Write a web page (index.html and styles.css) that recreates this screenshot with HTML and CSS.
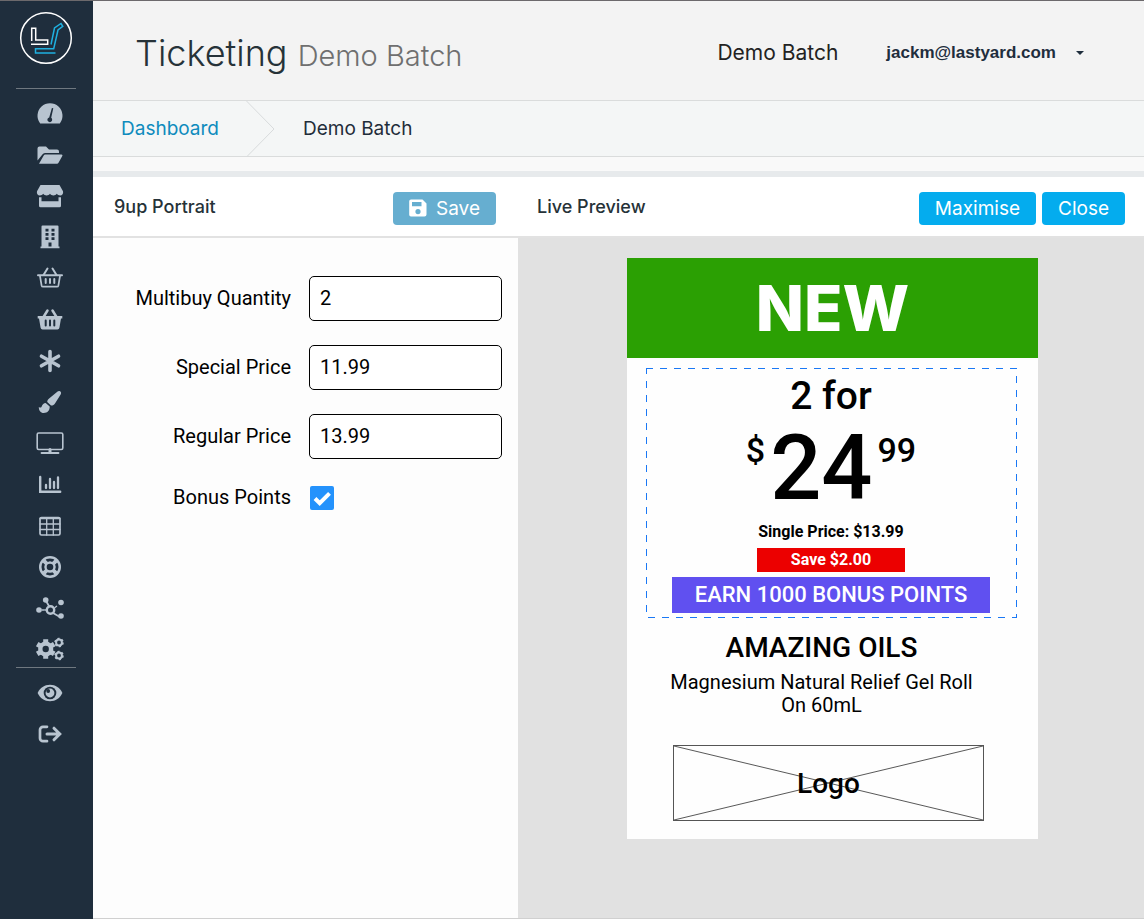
FILE: index.html
```html
<!DOCTYPE html>
<html lang="en">
<head>
<meta charset="utf-8">
<meta name="viewport" content="width=device-width, initial-scale=1">
<title>Ticketing – Demo Batch</title>
<link rel="stylesheet" href="styles.css">
</head>
<body>
<div class="app">
  <aside class="sidebar">
    <a class="brand" href="#" aria-label="Home">
      <svg width="54" height="54" viewBox="0 0 54 54" fill="none">
        <circle cx="27" cy="27" r="25.3" stroke="#fff" stroke-width="1.5"/>
        <path d="M12.700 30V17.300h4V29h12v4.200H12" stroke="#fff" stroke-width="1.500"/>
        <path d="M32 33.500L35.500 17l6.500-4.500 1.800 2.800-4.800 3.700-4.300 18.700H16.500v4.300h20" stroke="#1fb0e0" stroke-width="1.500"/>
      </svg>
    </a>
    <nav class="nav" aria-label="Main">
      <a href="#" aria-label="Overview"><svg viewBox="0 0 28 28"><path d="M4.200 23.500A12.500 12.500 0 1 1 23.800 23.500Z"/><path class="cut" d="M17.300 8.200l-2.100 9.600a2.400 2.400 0 1 1-2-.4l2.700-9.500z"/></svg></a>
      <a href="#" aria-label="Files"><svg viewBox="0 0 28 28"><path d="M1.500 19.500V7.500a2 2 0 0 1 2-2h6.500l3 3h8a2 2 0 0 1 2 2v1.600H9a3 3 0 0 0-2.600 1.500z"/><path d="M3 22.700l4.700-8.200a1.800 1.800 0 0 1 1.500-.9h16.300c.8 0 1.200.8.800 1.500l-3.800 6.600a1.800 1.800 0 0 1-1.500 1z"/></svg></a>
      <a href="#" aria-label="Stores"><svg viewBox="0 0 28 28"><path d="M4.500 3h19l3.500 6.200c.6 2.500-.8 4.300-2.800 4.300-1.500 0-2.600-.7-3.400-1.700-.8 1-2 1.700-3.400 1.700s-2.600-.7-3.400-1.700c-.8 1-2 1.700-3.400 1.700s-2.600-.7-3.400-1.700c-.8 1-1.900 1.700-3.400 1.700-2 0-3.400-1.800-2.800-4.300z"/><path d="M3 15.200h2.500v4h17v-4H25v8.500a1.500 1.500 0 0 1-1.500 1.500h-19A1.500 1.500 0 0 1 3 23.700z"/></svg></a>
      <a href="#" aria-label="Offices"><svg viewBox="0 0 28 28"><path d="M6.500 2.500h15a1 1 0 0 1 1 1v20H23.500v1.700h-19v-1.700h1v-20a1 1 0 0 1 1-1z"/><path class="cut" d="M9.500 5.800h3v2.800h-3zM15.500 5.800h3v2.800h-3zM9.500 10h3v2.800h-3zM15.500 10h3v2.800h-3zM9.500 14.200h3V17h-3zM15.500 14.200h3V17h-3zM12.500 19.500h3v4h-3z"/></svg></a>
      <a href="#" aria-label="Baskets"><svg viewBox="0 0 28 28"><g class="line"><path d="M7.500 11l4-6.500M20.500 11l-4-6.500" stroke-width="2"/><path d="M2 11.300h24" stroke-width="2"/><path d="M4 12l1.600 9.500a1.500 1.500 0 0 0 1.500 1.200h13.800a1.500 1.500 0 0 0 1.500-1.200L24 12" stroke-width="1.700"/><path d="M9.700 15v4M14 15v4M18.300 15v4" stroke-width="2"/></g></svg></a>
      <a href="#" aria-label="Orders"><svg viewBox="0 0 28 28"><path class="line" d="M7.500 11l4-6.500M20.500 11l-4-6.500" stroke-width="2.500"/><path d="M1.700 10h24.600v2.500h-1.300l-1.600 9.300a2 2 0 0 1-2 1.700H6.600a2 2 0 0 1-2-1.700L3 12.500H1.700z"/><path class="cutline" d="M9.700 14.500v5M14 14.500v5M18.300 14.500v5"/></svg></a>
      <a href="#" aria-label="Specials"><svg viewBox="0 0 28 28"><path class="line" d="M14 4.500v19M5.500 9.200l17 9.600M22.500 9.200l-17 9.600" stroke-width="3.600"/></svg></a>
      <a href="#" aria-label="Design"><svg viewBox="0 0 28 28"><path d="M23.500 3c1.500.4 2 1.700 1.300 3.200l-5.500 8.700c-1.200 1.800-2.600 2.700-4.300 2.600L11.200 14c.1-1.500.7-2.600 1.900-3.600l8.500-6.900c.6-.5 1.200-.7 1.900-.5z"/><path d="M9.700 14.900l4 3.600c.2 3.600-2 6.500-6 6.500C4.500 25 2.800 22.500 2.800 19c1.500 1 2.600.7 3-.8.600-2 2-3.300 3.900-3.300z"/></svg></a>
      <a href="#" aria-label="Screens"><svg viewBox="0 0 28 28"><g class="line"><rect x="1.200" y="4" width="25.600" height="16.500" rx="1.500" stroke-width="1.600"/><path d="M14 20.500v3" stroke-width="3"/><path d="M5.500 24h17" stroke-width="1.800"/></g></svg></a>
      <a href="#" aria-label="Reports"><svg viewBox="0 0 28 28"><path class="line" d="M4.200 6v14.700h20" stroke-width="2.400"/><path class="line" d="M10 17v-3M14 17V8M18 17v-6M22 17V6.500" stroke-width="2.300"/></svg></a>
      <a href="#" aria-label="Tables"><svg viewBox="0 0 28 28"><rect class="line" x="4" y="5.500" width="20" height="17.500" rx="1.500" stroke-width="1.700"/><path class="line" d="M4 6.500h20M4 12h20M4 17.500h20M10.700 6v17M17.300 6v17" stroke-width="1.300"/></svg></a>
      <a href="#" aria-label="Support"><svg viewBox="0 0 28 28"><circle cx="14" cy="14" r="11"/><circle class="ring" cx="14" cy="14" r="7"/><path class="line spoke" d="M7.700 7.700l4 4M20.300 7.700l-4 4M7.700 20.300l4-4M20.300 20.300l-4-4"/><circle cx="14" cy="14" r="5.500"/><circle class="cut" cx="14" cy="14" r="3.300"/></svg></a>
      <a href="#" aria-label="Network"><svg viewBox="0 -2 28 28"><g class="line"><path d="M10 5l3 5M17 17l7 4" stroke-width="1.800"/><path d="M19 11.500l2-1.500M6 14h4" stroke-width="1.300" stroke-dasharray="2 1"/><circle cx="14.500" cy="14" r="3.700" stroke-width="2.400"/></g><circle cx="9.700" cy="4" r="2.800"/><circle cx="25" cy="6.500" r="2.800"/><circle cx="3" cy="14" r="2.800"/><circle cx="25" cy="20" r="2.800"/></svg></a>
      <a href="#" aria-label="Settings"><svg viewBox="0 0 28 28"><path class="tooth" d="M9.700 4.200v19.600M1.200 9.100l17 9.800M18.200 9.100l-17 9.800"/><circle cx="9.700" cy="14" r="7.600"/><circle class="cut" cx="9.700" cy="14" r="3.200"/><circle class="smallteeth" cx="23" cy="7.500" r="3.800"/><circle class="smallring" cx="23" cy="7.500" r="2.900"/><circle class="smallteeth" cx="23" cy="20.500" r="3.800"/><circle class="smallring" cx="23" cy="20.500" r="2.900"/></svg></a>
    </nav>
    <nav class="nav nav-foot" aria-label="Account">
      <a href="#" aria-label="View"><svg viewBox="0 0 28 28"><path d="M1.600 14C4 8.800 8.500 5.800 14 5.800S24 8.800 26.400 14C24 19.200 19.500 22.200 14 22.200S4 19.200 1.600 14z"/><circle class="cut" cx="14" cy="14" r="6.300"/><circle cx="14" cy="14" r="4.400"/><circle class="cut" cx="12.200" cy="12" r="1.900"/></svg></a>
      <a href="#" aria-label="Sign out"><svg viewBox="0 0 28 28"><path class="line" d="M11 6.800H7a3 3 0 0 0-3 3v8.400a3 3 0 0 0 3 3h4" stroke-width="2.700"/><path class="line" d="M11 14h12M18 8.200l5.800 5.800-5.800 5.800" stroke-width="3"/></svg></a>
    </nav>
  </aside>

  <main class="main">
    <header class="header">
      <h1 class="title">Ticketing <small>Demo Batch</small></h1>
      <div class="account">
        <span class="batch">Demo Batch</span>
        <button class="user" type="button">jackm@lastyard.com<span class="caret"></span></button>
      </div>
    </header>
    <nav class="crumbs" aria-label="Breadcrumb">
      <a href="#">Dashboard</a>
      <svg class="chevron" viewBox="0 0 29 56" aria-hidden="true"><path d="M.5 0L28 28 .5 56"/></svg>
      <span>Demo Batch</span>
    </nav>

    <div class="toolbar">
      <div class="bar">
        <h2>9up Portrait</h2>
        <button class="btn btn-save" type="button"><svg viewBox="0 0 18 18" aria-hidden="true"><path fill="#fff" fill-rule="evenodd" d="M2 .5h11.500L17.500 4.500V15.500a2 2 0 0 1-2 2H2a1.800 1.800 0 0 1-1.800-1.800V2.300A1.800 1.800 0 0 1 2 .5zM3 3v4.200h9.500V3zM9 10a2.600 2.600 0 1 0 0 5.200A2.600 2.600 0 0 0 9 10z"/></svg>Save</button>
      </div>
      <div class="bar bar-preview">
        <h2>Live Preview</h2>
        <div class="actions">
          <button class="btn" type="button">Maximise</button>
          <button class="btn" type="button">Close</button>
        </div>
      </div>
    </div>

    <div class="panels">
      <form class="form">
        <label for="qty">Multibuy Quantity</label>
        <input class="field" id="qty" type="text" value="2">
        <label for="special">Special Price</label>
        <input class="field" id="special" type="text" value="11.99">
        <label for="regular">Regular Price</label>
        <input class="field" id="regular" type="text" value="13.99">
        <label for="bonus">Bonus Points</label>
        <span class="tick">
          <input id="bonus" type="checkbox" checked>
          <svg viewBox="0 0 24 24" aria-hidden="true"><path d="M5 12.500l4.700 4.700L19.500 7.300"/></svg>
        </span>
      </form>

      <section class="preview" aria-label="Live preview">
        <article class="ticket">
          <div class="banner">NEW</div>
          <div class="offer">
            <svg class="outline" aria-hidden="true"><rect width="100%" height="100%"/></svg>
            <div class="multi">2 for</div>
            <div class="price"><span class="part">$</span><span class="whole">24</span><span class="part">99</span></div>
            <div class="single">Single Price: $13.99</div>
            <div class="saving">Save $2.00</div>
            <div class="points">EARN 1000 BONUS POINTS</div>
          </div>
          <div class="product">
            <div class="name">AMAZING OILS</div>
            <div class="desc">Magnesium Natural Relief Gel Roll On 60mL</div>
          </div>
          <div class="logo">
            <svg viewBox="0 0 311 76" preserveAspectRatio="none" aria-hidden="true"><path d="M0 0L311 76M311 0L0 76"/></svg>
            <span>Logo</span>
          </div>
        </article>
      </section>
    </div>
  </main>
</div>
</body>
</html>
```
FILE: styles.css
```css
* { box-sizing: border-box; }
body { margin: 0; font-family: Inter, "Liberation Sans", sans-serif; color: #1f2d3a; background: #fff; }
h1, h2 { margin: 0; font-weight: 400; }
button { font: inherit; border: 0; cursor: pointer; }
a { text-decoration: none; }

.app { display: flex; min-height: 100vh; border-top: 1px solid #6c696c; }

/* Sidebar */
.sidebar { flex: none; width: 93px; background: #1f2e3d; display: flex; flex-direction: column; }
.brand { display: flex; padding: 10px 0 23px 19px; }
.nav { display: grid; grid-auto-rows: 1fr; height: 582px; margin: 0 17px 0 16px; border-top: 1px solid #6f7880; padding-left: 7px; padding-top: 4px; }
.nav a { display: flex; align-items: center; justify-content: center; }
.nav svg { width: 28px; height: 28px; fill: #b8c4d0; overflow: visible; }
.nav-foot { height: 87px; margin-top: -3px; }
.nav .cut { fill: #1f2e3d; }
.nav .line { fill: none; stroke: #b8c4d0; stroke-linecap: round; }
.nav .line path, .nav .line rect, .nav .line circle { fill: none; }
.nav .cutline { stroke: #1f2e3d; stroke-width: 2; stroke-linecap: round; }
.nav .ring { fill: none; stroke: #1f2e3d; stroke-width: 3; }
.nav .spoke { stroke-width: 4; stroke-linecap: butt; }
.nav .tooth { stroke: #b8c4d0; stroke-width: 5; }
.nav .smallteeth { fill: none; stroke: #b8c4d0; stroke-width: 2; stroke-dasharray: 2 2; }
.nav .smallring { fill: none; stroke: #b8c4d0; stroke-width: 2; }

/* Header */
.main { flex: 1; min-width: 0; display: flex; flex-direction: column; border-bottom: 1px solid #d0d0d0; }
.header { display: flex; align-items: center; justify-content: space-between; height: 100px; padding: 4px 60px 0 42px; background: #f3f3f3; border-bottom: 1px solid #dadcdc; }
.title { font-size: 36px; font-weight: 300; color: #263238; white-space: nowrap; }
.title small { font-size: 29px; color: #6f6f6f; }
.account { display: flex; align-items: center; gap: 48px; white-space: nowrap; }
.batch { font-size: 21px; color: #222; }
.user { display: flex; align-items: center; gap: 20px; padding: 0; background: none; font: bold 17px "Liberation Sans", Arial, sans-serif; color: #1f2e3d; }
.caret { border: 4px solid transparent; border-top-color: #1f2e3d; border-bottom: 0; }

.crumbs { display: flex; align-items: center; height: 56px; padding-left: 28px; background: #f4f6f6; border-bottom: 1px solid #dadcdc; font-size: 19px; }
.crumbs a { color: #0e8bbd; }
.chevron { height: 56px; width: 29px; margin: 0 28px 0 27px; fill: none; stroke: #d8dbdc; }

/* Toolbar */
.toolbar { display: grid; grid-template-columns: 425fr 626fr; margin-top: 14px; border-top: 6px solid #e7eaec; border-bottom: 2px solid #e2e2e2; box-shadow: 0 -14px #f9f9f9; }
.bar { display: flex; align-items: center; justify-content: space-between; height: 59px; padding: 3px 22px 0 21px; }
.bar h2 { font-size: 18px; font-weight: 500; color: #263238; padding-bottom: 4px; }
.bar-preview { padding: 3px 19px 0 19px; }
.actions { display: flex; gap: 6px; }
.btn { display: flex; align-items: center; gap: 9px; height: 33px; padding: 0 16px; border-radius: 4px; background: #04acee; color: #fff; font-size: 19px; }
.btn-save { background: #66aed0; }
.btn svg { width: 18px; height: 18px; }

/* Form */
.panels { flex: 1; display: grid; grid-template-columns: 425fr 626fr; font-family: Roboto, sans-serif; color: #000; }
.form { display: grid; grid-template-columns: 198px 1fr; grid-template-rows: 45px 45px 45px 30px; align-content: start; align-items: center; gap: 24px 18px; padding: 38px 16px 38px 0; font-size: 20px; background: #fdfdfd; }
.form label { text-align: right; padding-bottom: 2px; }
.field { width: 100%; height: 45px; padding: 0 10px 2px; border: 1px solid #000; border-radius: 5px; background: #fff; font: inherit; color: #000; }
.tick { display: grid; width: 26px; }
.tick input, .tick svg { grid-area: 1 / 1; width: 24px; height: 24px; margin: 0 1px; }
.tick input { appearance: none; background: #2492fc; border-radius: 2px; }
.tick svg { fill: none; stroke: #fff; stroke-width: 4; pointer-events: none; }

/* Ticket */
.preview { display: flex; justify-content: center; align-items: flex-start; padding: 20px 0 20px 3px; background: #e1e1e1; }
.ticket { width: 411px; padding-bottom: 18px; background: #fefefe; text-align: center; }
.banner { background: #2ba003; color: #fff; font: 800 63px/100px Inter, sans-serif; }
.offer { position: relative; display: flex; flex-direction: column; align-items: center; margin: 10px 22px 0 19px; padding: 4px 0; font-weight: 500; }
.outline { position: absolute; inset: 0; width: 100%; height: 100%; overflow: visible; }
.outline rect { fill: none; stroke: #1a78f5; stroke-dasharray: 7 7; shape-rendering: crispEdges; }
.multi { font-size: 39px; line-height: 48px; }
.price { display: flex; gap: 5px; line-height: 98px; }
.whole { font-size: 90px; }
.part { font-size: 34px; line-height: 60px; }
.single { font-size: 16px; line-height: 28px; font-weight: 700; }
.saving { width: 40%; margin-top: 2px; background: #ec0000; color: #fff; font-size: 16px; line-height: 24px; font-weight: 700; }
.points { width: 86%; margin-top: 5px; background: #6050f0; color: #fff; font-size: 22px; line-height: 36px; }
.product { margin: 13px 62px 0 40px; }
.name { font-size: 28px; line-height: 36px; font-weight: 500; }
.desc { margin-top: 5px; font-size: 20px; line-height: 23px; }
.logo { display: grid; place-items: center; height: 76px; margin: 28px 54px 0 46px; border: 1px solid #555; font-size: 28px; font-weight: 500; }
.logo svg, .logo span { grid-area: 1 / 1; }
.logo svg { width: 100%; height: 74px; fill: none; stroke: #555; }
```
